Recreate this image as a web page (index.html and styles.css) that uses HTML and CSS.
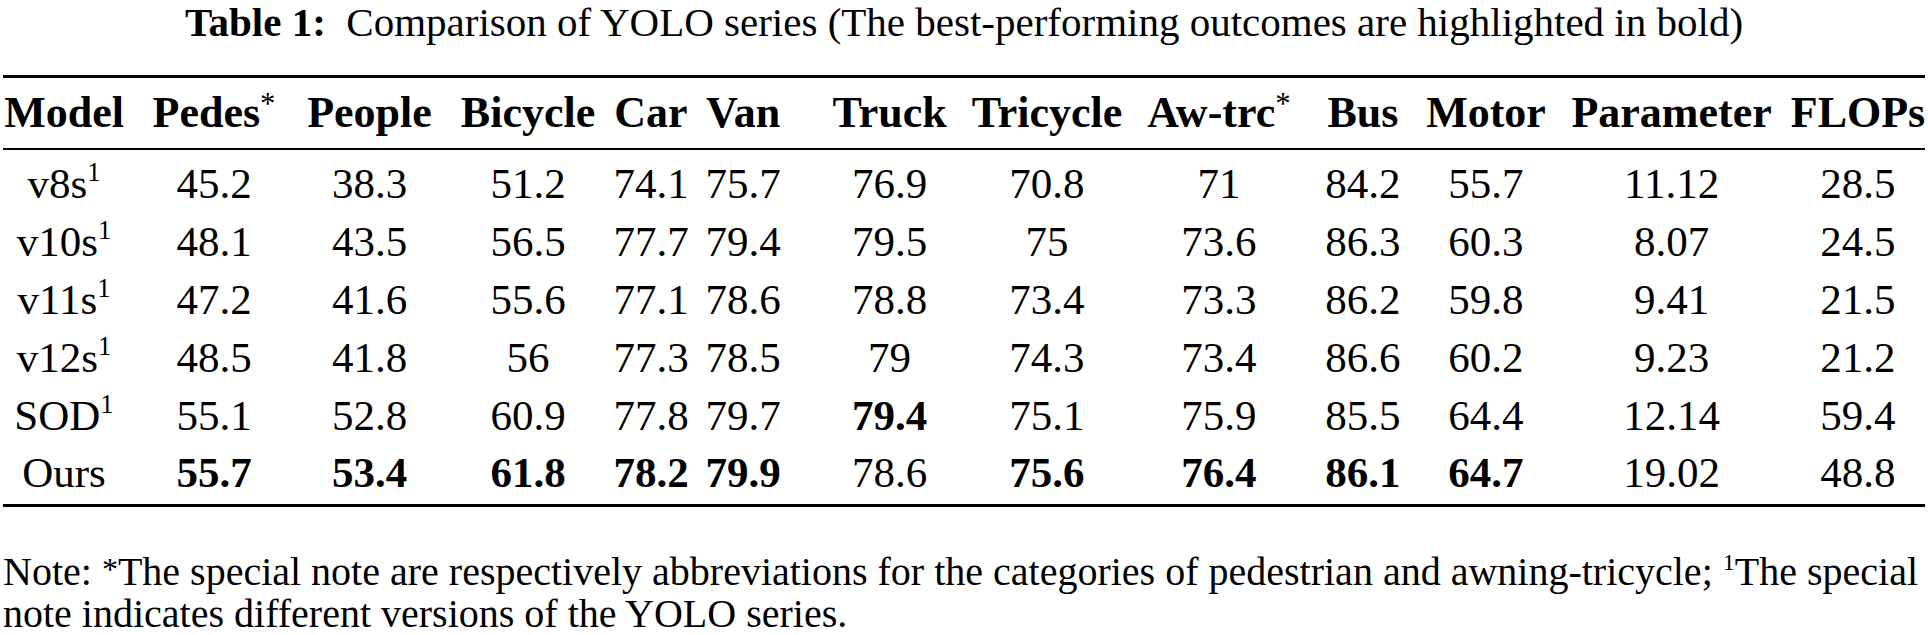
FILE: index.html
```html
<!DOCTYPE html>
<html lang="en">
<head>
<meta charset="utf-8">
<title>Table 1: Comparison of YOLO series</title>
<link rel="stylesheet" href="styles.css">
</head>
<body>
<div class="page">
  <p class="caption"><b>Table 1:</b>&nbsp; Comparison of YOLO series (The best-performing outcomes are highlighted in bold)</p>
  <div class="table">
    <div class="row head">
      <span class="cell">Model</span>
      <span class="cell">Pedes<sup class="ast">*</sup></span>
      <span class="cell">People</span>
      <span class="cell">Bicycle</span>
      <span class="cell">Car</span>
      <span class="cell">Van</span>
      <span class="cell">Truck</span>
      <span class="cell">Tricycle</span>
      <span class="cell">Aw-trc<sup class="ast">*</sup></span>
      <span class="cell">Bus</span>
      <span class="cell">Motor</span>
      <span class="cell">Parameter</span>
      <span class="cell">FLOPs</span>
    </div>
    <div class="body">
      <div class="row">
        <span class="cell">v8s<sup class="sup">1</sup></span>
        <span class="cell">45.2</span><span class="cell">38.3</span><span class="cell">51.2</span><span class="cell">74.1</span><span class="cell">75.7</span><span class="cell">76.9</span><span class="cell">70.8</span><span class="cell">71</span><span class="cell">84.2</span><span class="cell">55.7</span><span class="cell">11.12</span><span class="cell">28.5</span>
      </div>
      <div class="row">
        <span class="cell">v10s<sup class="sup">1</sup></span>
        <span class="cell">48.1</span><span class="cell">43.5</span><span class="cell">56.5</span><span class="cell">77.7</span><span class="cell">79.4</span><span class="cell">79.5</span><span class="cell">75</span><span class="cell">73.6</span><span class="cell">86.3</span><span class="cell">60.3</span><span class="cell">8.07</span><span class="cell">24.5</span>
      </div>
      <div class="row">
        <span class="cell">v11s<sup class="sup">1</sup></span>
        <span class="cell">47.2</span><span class="cell">41.6</span><span class="cell">55.6</span><span class="cell">77.1</span><span class="cell">78.6</span><span class="cell">78.8</span><span class="cell">73.4</span><span class="cell">73.3</span><span class="cell">86.2</span><span class="cell">59.8</span><span class="cell">9.41</span><span class="cell">21.5</span>
      </div>
      <div class="row">
        <span class="cell">v12s<sup class="sup">1</sup></span>
        <span class="cell">48.5</span><span class="cell">41.8</span><span class="cell">56</span><span class="cell">77.3</span><span class="cell">78.5</span><span class="cell">79</span><span class="cell">74.3</span><span class="cell">73.4</span><span class="cell">86.6</span><span class="cell">60.2</span><span class="cell">9.23</span><span class="cell">21.2</span>
      </div>
      <div class="row">
        <span class="cell">SOD<sup class="sup">1</sup></span>
        <span class="cell">55.1</span><span class="cell">52.8</span><span class="cell">60.9</span><span class="cell">77.8</span><span class="cell">79.7</span><span class="cell best">79.4</span><span class="cell">75.1</span><span class="cell">75.9</span><span class="cell">85.5</span><span class="cell">64.4</span><span class="cell">12.14</span><span class="cell">59.4</span>
      </div>
      <div class="row">
        <span class="cell">Ours</span>
        <span class="cell best">55.7</span><span class="cell best">53.4</span><span class="cell best">61.8</span><span class="cell best">78.2</span><span class="cell best">79.9</span><span class="cell">78.6</span><span class="cell best">75.6</span><span class="cell best">76.4</span><span class="cell best">86.1</span><span class="cell best">64.7</span><span class="cell">19.02</span><span class="cell">48.8</span>
      </div>
    </div>
  </div>
  <p class="note">Note: <span class="nast">*</span>The special note are respectively abbreviations for the categories of pedestrian and awning-tricycle; <sup class="nsup">1</sup>The special<br>note indicates different versions of the YOLO series.</p>
</div>
</body>
</html>
```

FILE: styles.css
```css
html, body {
  margin: 0;
  padding: 0;
  background: #ffffff;
}

body {
  width: 1928px;
  color: #000000;
  font-family: "Liberation Serif", "Times New Roman", serif;
}

.page {
  padding: 0 3px;
}

.caption {
  margin: 0 0 31px 0;
  height: 44px;
  line-height: 44px;
  font-size: 41px;
  text-align: center;
  white-space: nowrap;
}

.caption b {
  font-weight: bold;
}

.table {
  width: 1922px;
  border-top: 3px solid #000;
  border-bottom: 3px solid #000;
}

/* zero-width tracks sit on each column's centre line; the spacer tracks
   between them hold the centre-to-centre distances */
.row {
  display: grid;
  grid-template-columns:
    61px 0 150px 0 155.5px 0 158.5px 0 123px 0 92px 0 146.6px 0
    157.4px 0 172px 0 144px 0 123px 0 185.6px 0 186.4px 0;
  align-items: center;
  height: 57.8px;
  font-size: 43px;
  line-height: 1;
}

.row.head {
  height: 70px;
  font-size: 44px;
  font-weight: bold;
  border-bottom: 2px solid #000;
}

.body {
  padding: 5px 0 2px 0;
}

.cell {
  grid-row: 1;
  justify-self: center;
  white-space: nowrap;
}

.cell:nth-child(1) { grid-column: 2; }
.cell:nth-child(2) { grid-column: 4; }
.cell:nth-child(3) { grid-column: 6; }
.cell:nth-child(4) { grid-column: 8; }
.cell:nth-child(5) { grid-column: 10; }
.cell:nth-child(6) { grid-column: 12; }
.cell:nth-child(7) { grid-column: 14; }
.cell:nth-child(8) { grid-column: 16; }
.cell:nth-child(9) { grid-column: 18; }
.cell:nth-child(10) { grid-column: 20; }
.cell:nth-child(11) { grid-column: 22; }
.cell:nth-child(12) { grid-column: 24; }
.cell:nth-child(13) { grid-column: 26; }

.best {
  font-weight: bold;
}

.sup {
  font-size: 0.62em;
  line-height: 0;
  vertical-align: 0.62em;
}

.ast {
  font-weight: normal;
  font-size: 0.7em;
  line-height: 0;
  vertical-align: 0.42em;
}

.note {
  margin: 41px 0 0 0;
  font-size: 40px;
  line-height: 42px;
  white-space: nowrap;
}

.nast {
  font-size: 0.8em;
  vertical-align: 0.15em;
}

.nsup {
  font-size: 0.6em;
  line-height: 0;
  vertical-align: 0.6em;
}
```
